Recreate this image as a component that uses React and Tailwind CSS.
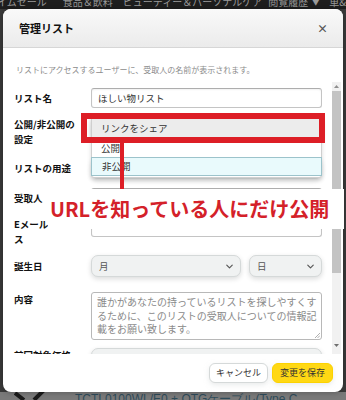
import { ChevronDown } from "lucide-react";

const Label = ({ children }) => (
  <div className="w-[77px] shrink-0">
    <div className="w-[66px] text-[9.5px] font-bold leading-[15px] text-[#111]">
      {children}
    </div>
  </div>
);

const TextBox = ({ value = "" }) => (
  <div className="h-[20px] w-[231px] rounded-[3px] border border-[#c4c4c4] border-t-[#adadad] bg-white pl-[6px] text-[9.5px] leading-[18px] text-[#333] shadow-[inset_0_1px_2px_rgba(0,0,0,0.06)]">
    {value}
  </div>
);

const GraySelect = ({ text, className = "" }) => (
  <div
    className={`flex h-[22px] items-center justify-between rounded-[7px] border border-[#d5d9d9] bg-[#f0f2f2] pl-[7px] pr-[5px] shadow-[0_2px_5px_rgba(15,17,17,0.15)] ${className}`}
  >
    <span className="text-[9.5px] leading-[12px] text-[#555]">{text}</span>
    <ChevronDown size={11} strokeWidth={2.5} className="text-[#555]" />
  </div>
);

export default function App() {
  return (
    <div className="flex h-[400px] w-[346px] flex-col overflow-hidden bg-[#3a3a3a] font-['Noto_Sans_CJK_JP',sans-serif]">
      {/* page nav behind the overlay */}
      <div className="h-[9px] shrink-0 overflow-hidden bg-[#1e1e1e]">
        <div className="mt-[-4px] flex whitespace-nowrap text-[10px] leading-[12px] text-[#9a9a9a]">
          <span className="ml-[-13px]">タイムセール</span>
          <span className="ml-[16px]">食品＆飲料</span>
          <span className="ml-[10px]">ビューティー＆パーソナルケア</span>
          <span className="ml-[6px]">閲覧履歴</span>
          <span className="ml-[4px] text-[7px]">▼</span>
          <span className="ml-[10px]">車&amp;</span>
        </div>
      </div>

      {/* modal */}
      <div className="relative mx-[3px] flex h-[383px] shrink-0 flex-col rounded-lg bg-white shadow-[0_0_6px_rgba(0,0,0,0.3)]">
        <div className="flex h-[39px] shrink-0 items-center justify-between rounded-t-lg border-b border-[#d6d6d6] bg-gradient-to-b from-[#f9f9f9] to-[#ebebeb] pl-[16px] pr-[15px]">
          <span className="text-[11px] font-bold leading-[14px] text-[#111]">
            管理リスト
          </span>
          <span className="text-[11px] font-bold leading-[14px] text-[#555]">×</span>
        </div>

        <div className="pl-[13px] pt-[16px] pb-[6px] text-[8px] leading-[12px] text-[#8c8c8c]">
          リストにアクセスするユーザーに、受取人の名前が表示されます。
        </div>

        <div className="flex h-[272px] shrink-0 overflow-hidden">
          <div className="flex w-[329px] shrink-0 flex-col pl-[11px]">
            <div className="mt-[6px] flex items-center">
              <Label>リスト名</Label>
              <TextBox value="ほしい物リスト" />
            </div>
            <div className="mt-[9px] flex items-start">
              <Label>公開/非公開の設定</Label>
              <GraySelect text="リンクをシェア" className="w-[231px]" />
            </div>
            <div className="mt-[10px] flex items-center">
              <Label>リストの用途</Label>
              <GraySelect text="ほしい物リスト" className="h-[20px] w-[231px]" />
            </div>
            <div className="mt-[9px] flex items-center">
              <Label>受取人</Label>
              <TextBox />
            </div>
            <div className="mt-[9px] flex items-start">
              <Label>Eメールアドレス</Label>
              <TextBox />
            </div>
            <div className="mt-[8px] flex items-center">
              <Label>誕生日</Label>
              <div className="flex w-[231px] gap-[8px]">
                <GraySelect text="月" className="w-[150px]" />
                <GraySelect text="日" className="w-[73px]" />
              </div>
            </div>
            <div className="mt-[15px] flex items-start">
              <Label>内容</Label>
              <div className="relative h-[48px] w-[231px] rounded-[3px] border border-[#b8b8b8] bg-white pl-[5px] pr-[3px] pt-[2px] text-[10px] leading-[13.5px] text-[#8a8a8a]">
                誰かがあなたの持っているリストを探しやすくするために、このリストの受取人についての情報記載をお願い致します。
                <svg
                  className="absolute bottom-[1px] right-[1px]"
                  width="6"
                  height="6"
                  viewBox="0 0 6 6"
                >
                  <path d="M1 6 L6 1 M3.5 6 L6 3.5" stroke="#9a9a9a" strokeWidth="0.8" />
                </svg>
              </div>
            </div>
            <div className="mt-[8px] flex items-start">
              <Label>前回対象価格</Label>
              <GraySelect text="希望しない" className="w-[231px]" />
            </div>
          </div>

          {/* scrollbar */}
          <div className="mr-[2px] flex w-[9px] shrink-0 flex-col bg-[#f1f1f1]">
            <div className="flex h-[9px] items-center justify-center">
              <svg width="5" height="3" viewBox="0 0 5 3">
                <path d="M0 3 L2.5 0 L5 3Z" fill="#8f8f8f" />
              </svg>
            </div>
            <div className="h-[182px] bg-[#c3c3c3]" />
            <div className="flex-1" />
            <div className="flex h-[5px] items-center justify-center">
              <svg width="5" height="3" viewBox="0 0 5 3">
                <path d="M0 0 L2.5 3 L5 0Z" fill="#6f6f6f" />
              </svg>
            </div>
            <div className="h-[6px]" />
          </div>
        </div>

        <div className="flex flex-1 justify-end gap-[4px] pr-[10px] pt-[9px]">
          <button className="flex h-[20px] w-[59px] items-center justify-center rounded-[6px] border border-[#d5d9d9] bg-white text-[9px] text-[#333] shadow-[0_2px_5px_rgba(213,217,217,0.5)]">
            キャンセル
          </button>
          <button className="flex h-[20px] w-[61px] items-center justify-center rounded-[6px] border border-[#fcd200] bg-[#ffd814] text-[9px] text-[#333] shadow-[0_2px_5px_rgba(213,217,217,0.5)]">
            変更を保存
          </button>
        </div>

        {/* open dropdown list */}
        <div className="absolute left-[88px] top-[107px] w-[231px] rounded-b-[3px] border border-[#cfcfcf] bg-white pb-[1px] text-[9.5px] text-[#333] shadow-[0_2px_4px_rgba(0,0,0,0.15)]">
          <div className="flex h-[23px] items-center bg-[#ececec] pl-[9px]">リンクをシェア</div>
          <div className="flex h-[17px] items-center pl-[9px]">公開</div>
          <div className="mx-[-1px] flex h-[19px] items-center border border-[#9cc3cb] bg-[#e9fafc] pl-[10px]">
            非公開
          </div>
        </div>

        {/* annotation */}
        <div className="absolute left-[78px] top-[104px] h-[30px] w-[244px] border-[6px] border-[#dd1e26]" />
        <div className="absolute left-[117px] top-[134px] h-[47px] w-[4px] bg-[#dd1e26]" />
        <div className="absolute left-[45px] top-[180px] flex h-[40px] w-[296px] items-center bg-white pl-[2px]">
          <span className="text-[20px] font-bold leading-[24px] text-[#d42129]">
            URLを知っている人にだけ公開
          </span>
        </div>
      </div>

      {/* page content behind the overlay */}
      <div className="flex flex-1 overflow-hidden bg-[#7a7a7a]">
        <svg className="ml-[14px] shrink-0" width="32" height="8" viewBox="0 0 32 8">
          <path d="M1 1 L10 8 M20 8 L30 -2" stroke="#1b1b1b" strokeWidth="4" />
        </svg>
        <span className="ml-[29px] whitespace-nowrap font-['Liberation_Sans',sans-serif] text-[12px] leading-[14px] text-[#2f4c5a]">
          TCTL0100WL/E0 + OTGケーブル(Type C
        </span>
      </div>
    </div>
  );
}
